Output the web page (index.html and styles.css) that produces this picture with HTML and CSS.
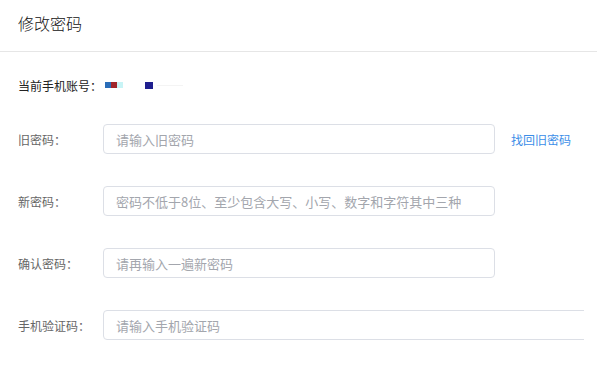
FILE: index.html
```html
<!DOCTYPE html>
<html lang="zh-CN">
<head>
<meta charset="utf-8">
<title>修改密码</title>
<link rel="stylesheet" href="styles.css">
</head>
<body>
<div class="page">
  <div class="header"><span class="title">修改密码</span></div>
  <div class="form">
    <div class="account">
      <span class="account-label">当前手机账号：</span>
      <span class="mask">
        <i class="b1"></i><i class="b2"></i><i class="b3"></i><i class="gap"></i><i class="b4"></i><i class="b5"></i>
      </span>
    </div>
    <div class="row">
      <label class="label">旧密码：</label>
      <input class="field" type="password" placeholder="请输入旧密码">
      <a class="link" href="#">找回旧密码</a>
    </div>
    <div class="row">
      <label class="label">新密码：</label>
      <input class="field" type="password" placeholder="密码不低于8位、至少包含大写、小写、数字和字符其中三种">
    </div>
    <div class="row">
      <label class="label">确认密码：</label>
      <input class="field" type="password" placeholder="请再输入一遍新密码">
    </div>
    <div class="row">
      <label class="label">手机验证码：</label>
      <input class="field wide" type="text" placeholder="请输入手机验证码">
    </div>
  </div>
</div>
</body>
</html>
```
FILE: styles.css
```css
* { box-sizing: border-box; }
html, body { margin: 0; padding: 0; background: #fff; }
body {
  font-family: "Noto Sans CJK SC", "Microsoft YaHei", sans-serif;
  color: #333;
  overflow: hidden;
}
.header {
  height: 52px;
  padding: 11px 0 0 18px;
  border-bottom: 1px solid #e6e6e6;
}
.title {
  font-size: 16px;
  line-height: 20px;
  font-weight: 300;
  color: #111;
}
.form {
  width: 584px;
  overflow: hidden;
  padding-left: 18px;
  padding-top: 23px;
}
.account {
  display: flex;
  align-items: center;
  height: 20px;
  font-size: 12px;
  color: #222;
  margin-bottom: 29px;
}
.account-label { width: 87px; }
.mask { display: flex; align-items: center; height: 6px; }
.mask i { display: block; height: 6px; }
.b1 { width: 6px; background: #2a6db8; }
.b2 { width: 6px; background: #a0262b; }
.b3 { width: 6px; background: #c8f4f6; }
.gap { width: 22px; }
.b4 { width: 8px; height: 7px !important; background: #1f1f8f; }
.b5 { width: 26px; height: 1px !important; background: #f4f4f4; margin-left: 4px; }
.row {
  display: flex;
  align-items: center;
  height: 30px;
  margin-bottom: 32px;
}
.label {
  flex: none;
  width: 85px;
  font-size: 12px;
  color: #666;
}
.field {
  flex: none;
  width: 392px;
  height: 30px;
  border: 1px solid #dcdfe6;
  border-radius: 4px;
  padding: 0 12px;
  font-family: inherit;
  font-size: 13px;
  color: #333;
  outline: none;
  background: #fff;
}
.field::placeholder { color: #a3a6ad; }
.field.wide { width: 540px; }
.link {
  margin-left: 16px;
  font-size: 12px;
  color: #3c8ee8;
  text-decoration: none;
}
```
